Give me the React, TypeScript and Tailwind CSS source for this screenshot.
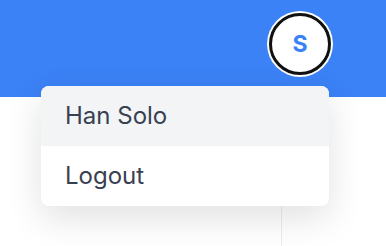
import React from "react";

const App = () => {
  return (
    <div className="relative w-[386px] h-[246px] overflow-hidden bg-white font-['Inter',sans-serif]">
      {/* Top bar */}
      <header className="h-[97px] bg-[#3b82f6] flex justify-end items-start pt-[13px] pr-[55px]">
        <button className="w-[62px] h-[62px] rounded-full bg-white border-[3px] border-[#111] ring-2 ring-white flex items-center justify-center text-[#3b82f6] text-[23px] font-bold">
          S
        </button>
      </header>

      {/* Page body */}
      <div className="flex h-[149px]">
        <aside className="w-[282px] h-full border-r border-[#ececec]" />
        <main className="flex-1" />
      </div>

      {/* User menu */}
      <div className="absolute left-[41px] top-[86px] w-[288px] rounded-lg bg-white overflow-hidden shadow-[0_12px_36px_rgba(0,0,0,0.12)]">
        <div className="h-[60px] px-6 flex items-center bg-[#f3f4f6] text-[24px] text-[#374151]">
          Han Solo
        </div>
        <div className="h-[60px] px-6 flex items-center text-[24px] text-[#374151]">
          Logout
        </div>
      </div>
    </div>
  );
};

export default App;
